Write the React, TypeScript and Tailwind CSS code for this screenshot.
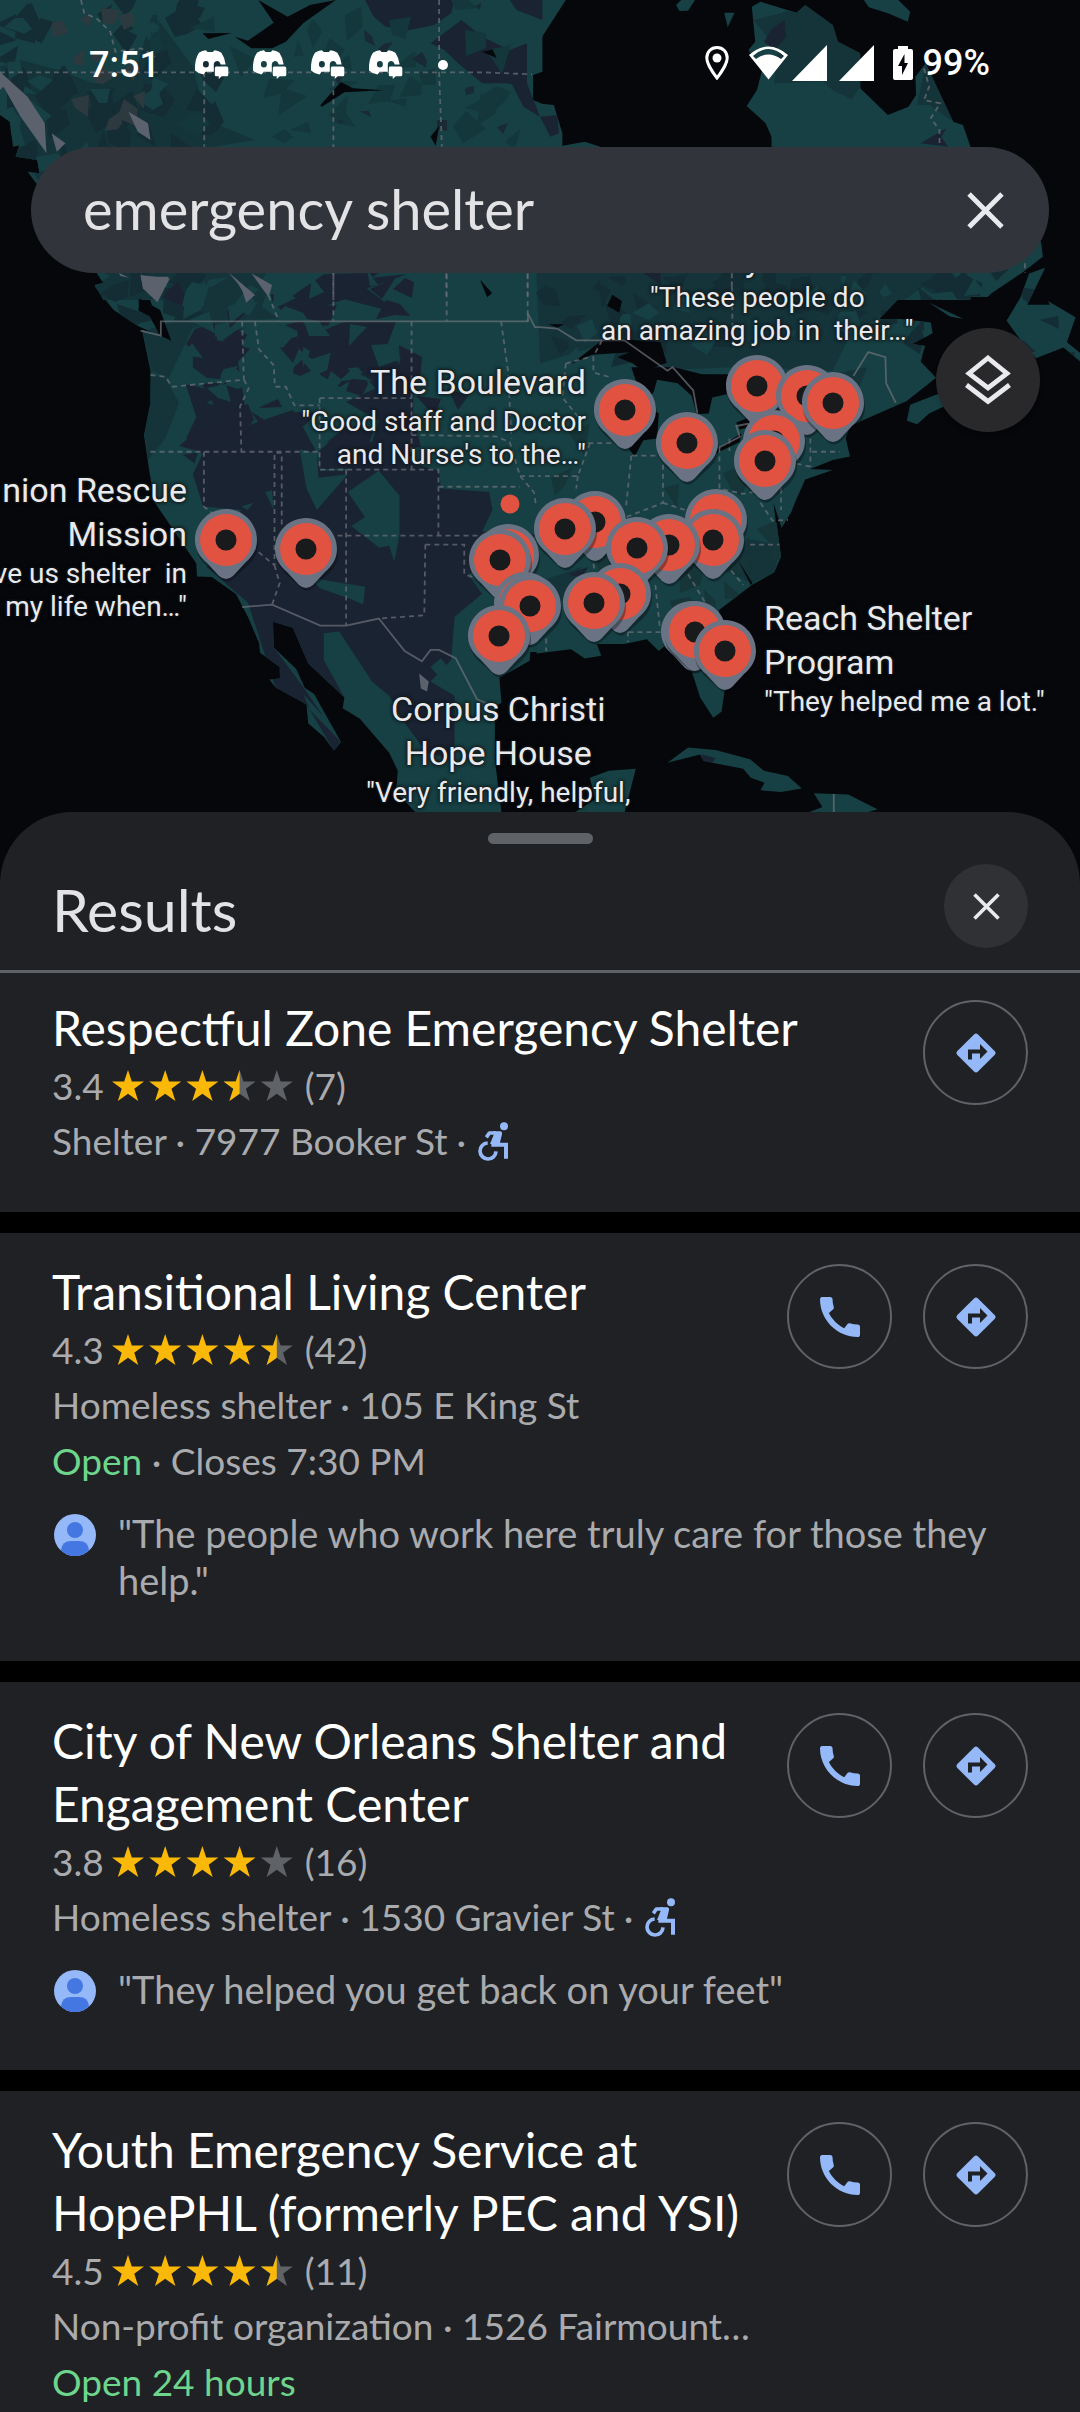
import type { ReactNode } from 'react';

const LATO = "font-['Lato',sans-serif]";
const ROBOTO = "font-['Roboto',sans-serif]";

/* ---------- Map artwork ---------- */

const NW = 'scale(.3444 .3333)';
const NE = 'translate(540 0) scale(.3444 .3333)';
const SW = 'translate(0 260) scale(.3444 .3571)';
const SE = 'translate(540 260) scale(.3444 .3571)';

const LAND: [string, string][] = [
  [NW, 'M0 0H1575V215L1548 225V300L1575 312V900H300L275 855 300 848 120 570 80 515 115 520 108 480 45 470 70 390 85 430 38 440 28 365 0 345Z'],
  [NE, 'M-10 0H75L0 120-10 140Z'],
  [NE, 'M-10 310L40 315 65 400 65 437 130 425 175 440V900H-10Z'],
  [NE, 'M100 460H1250V900H100Z'],
  [NE, 'M615 20L640 5 745 38 770 15 850 75 865 125 930 160 930 265 1010 345 1070 320 1092 285 1090 230 1120 190 1200 365 1228 375 1250 440V720L1455 725 1460 770 1400 818 1296 890H680L672 410 655 370 600 318 630 270 645 210 605 150 625 125Z'],
  [NE, 'M395 15L410 0H450L430 32 405 33Z'],
  [NE, 'M535 38L565 38 545 82Z'],
  [NE, 'M940 0H1040L1075 35 1068 65 1010 40 955 22Z'],
  [SW, 'M300 30L302 70 275 74 330 140 400 185 497 226 465 150 405 142 402 108 465 140H1575V1098L1540 1098 1538 1122 1450 1170 1456 1240 1437 1252 1437 1400 1456 1546 1520 1560H1220L1150 1490 1155 1430 1130 1380 1045 1285 995 1255 1000 1225 895 1130 850 1030 793 1013 795 1085 860 1145 885 1198 912 1215 990 1350 970 1374 940 1335 895 1298 890 1245 800 1197 782 1175 813 1172 812 1140 755 1100 752 1072 720 1000 685 935 615 888 572 886 570 850 450 680 435 600 418 490 437 400 437 310 412 195 465 210 400 100V20Z'],
  [SW, 'M400 20H1575V200H470Z'],
  [SE, 'M-10 20H1385L1300 103 1050 100 985 165 1050 165 1135 175 1140 205 1080 235 1118 240 1105 285 1150 330 1065 395 900 465 888 500 900 550 850 560 785 585 850 588 770 615 740 680 730 705 702 750 680 690 700 830 680 875 615 910 520 980 500 1100 537 1200 527 1265 503 1282 465 1225 440 1150 360 1082 345 1095 310 1062 245 1075 165 1075 178 1108 130 1116 90 1090-10 1102Z'],
  [SE, 'M1065 450L1075 405 1155 375 1240 340 1250 375 1130 430 1095 460Z'],
  [SE, 'M1467 22L1420 38 1395 105 1355 170 1400 230 1440 275 1520 245 1575 290V265L1530 230 1555 160 1475 115 1480 125 1415 125Z'],
  [SE, 'M1130 120L1230 165 1190 158Z'],
  [SE, 'M370 1408L430 1365 510 1372 610 1398 650 1430 720 1445 760 1480 700 1490 640 1485 652 1464 612 1450 590 1425 475 1403 465 1385Z'],
  [SE, 'M770 1550L820 1532 795 1493 895 1497 980 1538 940 1550Z'],
  [SE, 'M95 1550L160 1510 145 1450 200 1430 278 1425 245 1550Z'],
];

const DARK: [string, string][] = [
  [NW, 'M170 210L270 250 400 190 455 0 470 440 480 450V900H300L100 520 0 200 60 180Z'],
  [NW, 'M460 60L560 200 600 360 740 420 620 440H460Z'],
  [NE, 'M620 60L700 40 770 15 850 75 930 160 930 260 905 298 850 270 820 245 680 250 690 150Z'],
  [NE, 'M1120 190L1200 365 1130 315 1095 315Z'],
  [SE, 'M-10 30H1180L1000 150 900 210 850 310 560 300 300 310 200 230 0 290Z'],
  [SE, 'M1080 60L1250 80 1140 95Z'],
  [SW, 'M460 30H800L760 130 810 165 700 172 560 190 490 330 440 310 415 200 540 160Z'],
  [SW, 'M440 320L480 330 520 400 480 500 430 560 420 490Z'],
  [SE, 'M540 870L600 780 700 800 680 875 615 905Z'],
  [SE, 'M0 900L120 860 60 960 0 1000Z'],
  [SE, 'M800 330L950 300 900 420 850 440Z'],
];

const NAVY: [string, string][] = [
  [NW, 'M1060 0L1320 0 1310 40 1260 75 1190 90 1120 80 1085 50Z'],
  [NW, 'M1250 130L1340 60 1400 110 1480 150 1530 130V260L1470 250 1400 250 1330 190 1290 150Z'],
  [NW, 'M1480 0H1575V60L1500 30Z'],
  [NW, 'M1480 240L1530 250 1568 350 1520 320Z'],
  [NE, 'M675 85L710 60 715 110 680 150 650 125Z'],
  [NE, 'M1105 430L1180 385 1165 410 1185 440Z'],
  [NE, 'M0 350L50 345 55 400 30 410Z'],
  [SW, 'M940 40L1100 36 1080 50 1180 40 1065 80 1160 150 1000 110 940 130 950 172 830 130 850 100Z'],
  [SW, 'M860 172H1150L1120 250 1170 300 1200 330V580L930 585 925 500 860 470 1000 400 1040 330 950 310 960 260 905 277 870 250Z'],
  [SW, 'M560 250L580 215 630 215 630 265 740 280 760 330 720 360 790 350 720 400 730 460 650 455 600 370 700 340 600 330 560 300Z'],
  [SW, 'M540 350L700 340 600 400 700 430 640 490 850 420 920 535 930 590H1010L1000 560 1120 540 1200 570 1275 590 1280 640 1420 650 1430 700 1400 760 1560 770 1360 880 1400 935 1320 1000 1310 1120 1250 1180 1320 1220V1400L1240 1380 1170 1290 1130 1220 1080 1180 985 1040 940 1045V1120L1000 1225 895 1130 850 1030 793 1013 795 1085 880 1195 990 1350 970 1374 890 1245 800 1197 720 960 600 860 700 700 590 690 560 600 590 540 540 500 570 440Z'],
  [SW, 'M1300 360L1360 380 1330 420Z'],
  [SW, 'M530 545L575 540 565 570Z'],
  [SE, 'M470 1385L510 1395 500 1408 470 1400Z'],
  [SE, 'M80 880L140 860 120 890Z'],
  [SE, 'M300 36H350V70Z'],
];

const TEAL: [string, string][] = [
  [SW, 'M1010 650L1100 590 1160 660V770L1145 845 1130 800 1100 805 1020 745 1060 720Z'],
  [SW, 'M900 890L1060 915 1055 965 1020 950 930 920Z'],
  [SW, 'M870 530L920 540 925 610 1010 600 920 700 890 640Z'],
  [SW, 'M770 650L790 645 795 700Z'],
  [SW, 'M700 690L735 680 720 700Z'],
  [SW, 'M1320 1000L1400 935 1370 1020Z'],
  [SW, 'M880 1215L960 1300 990 1350 900 1260Z'],
  [SW, 'M690 280L650 170 800 165 840 210 800 290 900 260 850 350 720 460Z'],
  [SW, 'M950 310L1040 300 1090 360 1000 400Z'],
  [SW, 'M870 450L990 390 1100 450 1080 510 980 490 920 540Z'],
  [SW, 'M1250 1140L1280 1115 1310 1150 1290 1185Z'],
  [SW, 'M860 172L920 205 1000 172Z'],
];

const SNOW: [string, string][] = [
  [NW, 'M0 215L80 290 130 370 135 460 60 350 10 260 0 270Z'],
  [NW, 'M373 335L430 370 437 420 400 395Z'],
  [NW, 'M150 400L190 430 165 455Z'],
  [NW, 'M410 830H490L460 900 415 860Z'],
  [NW, 'M665 820L740 885 720 900 690 850Z'],
  [NW, 'M730 820L790 855 780 892Z'],
  [SW, 'M408 42L493 52 457 118 415 80Z'],
  [SW, 'M665 36L740 98 715 120 700 75Z'],
  [SW, 'M1217 1158L1245 1180 1240 1208 1222 1200Z'],
  [SW, 'M345 36L375 50 350 45Z'],
];

const WATER: [string, string][] = [
  [NW, 'M750 0L835 50 900 15 975 0 880 70 830 125 790 145 730 145 682 110 720 122 795 68Z'],
  [NW, 'M588 100L672 99 605 117Z'],
  [NW, 'M990 246L1025 265 1115 271 1000 277 935 320 930 316Z'],
  [NW, 'M1400 155L1430 148 1442 174Z'],
  [NW, 'M1275 378L1265 437 1250 410Z'],
  [NW, 'M1395 840L1428 880 1415 890Z'],
  [SW, 'M405 108L465 140 497 226 460 205 440 160 402 142Z'],
  [SW, 'M1395 58L1428 92 1415 104Z'],
  [SE, 'M195 128L210 97 238 115 230 148Z'],
  [SE, 'M90 292L180 225 245 222 350 230 368 288 300 312 270 290 225 272 260 258 150 265Z'],
  [SE, 'M265 300L390 300 470 320 545 320 560 350 545 375 500 385 490 430 455 432 440 380 400 345 340 335 330 370 300 400Z'],
  [SE, 'M300 400L345 430 340 500 300 505 275 550 255 525Z'],
  [SE, 'M455 565L585 485 580 510 515 540Z'],
  [SE, 'M570 455L610 440 620 465 580 475Z'],
  [SE, 'M678 680L695 735 685 735Z'],
  [SE, 'M575 840L617 905 612 910Z'],
  [SE, 'M785 585L880 560 878 572Z'],
  [SE, 'M25 180H70L50 190Z'],
];

const BORDERS: [string, string][] = [
  [SW, 'M408 198L467 212V172H1533V150L1553 188H1568'],
  [SE, 'M0 188L50 192 105 225H180L245 225 370 310 385 300 445 365 457 430M520 525L580 495 570 465 605 458M910 325L953 258 1003 272 1005 345 1033 400'],
  [SW, 'M703 972L790 965 930 1024H1005L1100 1004 1175 1095 1225 1124 1250 1092H1275L1323 1115 1385 1230 1410 1240'],
  [SE, 'M853 1495V1546'],
];

const STATE_LINES: [string, string][] = [
  [NW, 'M235 0L245 40 280 55 320 95 335 155 410 145 450 170M0 217H1200L1400 217 1545 223M593 217V440M968 217V900M1275 0V217L1283 440M1296 820V900M1532 820V900'],
  [NE, 'M1115 205L1130 260 1115 300 1162 310 1135 355 1160 390V440M557 820V860M1408 790V818'],
  [SW, 'M968 40V172M1297 40V172M1532 40V172M780 100L810 172M703 172L708 335M740 172L752 250 795 295 798 355 830 355 855 407H928M437 322L480 327 500 355 708 335 722 360 697 410 701 537M437 537H928M592 537V690L797 855V540H818V745M797 855L812 905 790 965M928 387V587H1273V772M928 387H1195M1195 172V587M1005 587V1022M980 772H1400M1235 797H1348V880L1380 890M1235 797L1232 995 1100 1004M1195 490L1440 494 1480 510 1510 605 1550 650 1557 690M1455 172L1475 310 1485 500M1273 635H1510M1510 605H1568'],
  [SE, 'M180 225L155 270V315L210 330M75 290L150 270M75 290L65 385 120 450M140 513H210M145 513L110 605H0M110 605L105 640M268 548H340M265 548L250 690M357 548V680L250 720M357 680L420 700M521 525V640L590 655 640 645M560 240L557 60M550 500V535M785 500V580M790 537H870M610 797H695M555 870L590 910M430 880L480 960M155 850L160 880M335 910L348 1030M350 1042H250M255 1040V1070M18 1060V1095M640 680L675 730 720 728M700 640V700M745 570L790 580'],
];

/* Small deterministic generator for the terrain facets. */
function makeFacets(count: number, x0: number, y0: number, w: number, h: number, size: number, seed: number) {
  let s = seed;
  const rnd = () => {
    s = (s * 16807) % 2147483647;
    return s / 2147483647;
  };
  return Array.from({ length: count }, () => {
    const cx = x0 + rnd() * w;
    const cy = y0 + rnd() * h;
    const n = 3 + Math.floor(rnd() * 3);
    const start = rnd() * 6.28;
    return Array.from({ length: n }, (_, i) => {
      const a = start + (i / n) * 6.28;
      const r = size * (0.2 + rnd() * 1.2);
      return `${Math.round(cx + Math.cos(a) * r)},${Math.round(cy + Math.sin(a) * r)}`;
    }).join(' ');
  });
}

const FACETS = [
  { fill: '#142c33', points: makeFacets(60, 0, 0, 220, 330, 18, 77) },
  { fill: '#174044', points: makeFacets(40, 0, 0, 170, 330, 14, 401) },
  { fill: '#2c3a3f', points: makeFacets(12, 60, 0, 90, 130, 11, 9) },
  { fill: '#14373b', points: makeFacets(30, 150, 0, 380, 150, 16, 1234) },
  { fill: '#1a2a35', points: makeFacets(12, 330, 0, 250, 140, 8, 5678) },
  { fill: '#1b2332', points: makeFacets(34, 180, 280, 260, 170, 16, 31) },
  { fill: '#174044', points: makeFacets(30, 190, 280, 240, 130, 14, 913) },
  { fill: '#142c33', points: makeFacets(40, 540, 270, 460, 90, 14, 2222) },
  { fill: '#174044', points: makeFacets(24, 560, 275, 460, 120, 12, 3434) },
  { fill: '#153539', points: makeFacets(24, 560, 420, 240, 230, 16, 808) },
  { fill: '#142c33', points: makeFacets(10, 1000, 280, 80, 130, 11, 66) },
];

const PINS: [number, number][] = [
  [757, 386], [807, 396], [833, 403], [625, 410], [687, 443], [774, 441], [765, 461],
  [716, 520], [713, 540], [595, 522], [565, 529], [669, 545], [637, 548],
  [508, 555], [500, 560], [620, 594], [594, 603], [525, 603], [530, 606], [499, 636],
  [692, 632], [695, 632], [725, 651], [226, 540], [306, 549],
];

function Shapes({ items, fill }: { items: [string, string][]; fill: string }) {
  return <g fill={fill}>{items.map(([t, d], i) => <path key={i} transform={t} d={d} />)}</g>;
}

function Lines({ items, dash }: { items: [string, string][]; dash?: string }) {
  return (
    <g fill="none" stroke="#6a6e75" strokeOpacity=".75" strokeWidth="1.8" strokeDasharray={dash}>
      {items.map(([t, d], i) => <path key={i} transform={t} d={d} vectorEffect="non-scaling-stroke" />)}
    </g>
  );
}

function MapArt() {
  return (
    <svg className="absolute left-0 top-0 h-[812px] w-[1080px]" viewBox="0 0 1080 812" aria-hidden="true">
      <defs>
        <clipPath id="land">
          {LAND.map(([t, d], i) => <path key={i} transform={t} d={d} />)}
        </clipPath>
      </defs>
      <rect width="1080" height="812" fill="#05070b" />
      <Shapes items={LAND} fill="#164043" />
      <g clipPath="url(#land)">
        <Shapes items={DARK} fill="#14343a" />
        <Shapes items={NAVY} fill="#1a2332" />
        <Shapes items={TEAL} fill="#164043" />
        {FACETS.map((f, i) => (
          <g key={i} fill={f.fill}>{f.points.map((p, j) => <polygon key={j} points={p} />)}</g>
        ))}
        <Shapes items={SNOW} fill="#5b616d" />
      </g>
      <Shapes items={WATER} fill="#05070b" />
      <Lines items={STATE_LINES} dash="5 4" />
      <Lines items={BORDERS} />
      {PINS.map(([x, y], i) => (
        <g key={i} transform={`translate(${x} ${y})`}>
          <path d="M0-29C17-29 31-15 31 2 31 12 26 19 19 25L6 37Q0 42-6 37L-19 25C-26 19-31 12-31 2-31-15-17-29 0-29Z" transform="translate(1 2)" fill="#05070b" opacity=".35" />
          <path d="M0-31C17-31 31-17 31 0 31 10 26 17 19 23L7 36Q0 42-7 36L-19 23C-26 17-31 10-31 0-31-17-17-31 0-31Z" fill="#6a7383" />
          <circle r="26" fill="#e25241" />
          <circle r="10.5" fill="#191a1c" />
        </g>
      ))}
      <circle cx="510" cy="504" r="9.5" fill="#e25241" />
    </svg>
  );
}

function MapLabel({ title, lines, className }: { title: string[]; lines: string[]; className: string }) {
  return (
    <div className={`absolute whitespace-pre text-[#e8eaed] [text-shadow:0_0_3px_#16181b,0_0_3px_#16181b,0_0_4px_#16181b] ${ROBOTO} ${className}`}>
      {title.map((t) => <p key={t} className="text-[34px] leading-[44px]">{t}</p>)}
      <div className="pt-px">
        {lines.map((t) => <p key={t} className="text-[28px] leading-[33px]">{t}</p>)}
      </div>
    </div>
  );
}

/* ---------- Icons ---------- */

function ChatIcon() {
  return (
    <svg className="h-[29px] w-[35px]" viewBox="0 0 104 88" fill="#fff" aria-hidden="true">
      <path fillRule="evenodd" d="M14 8Q24 2 35 1L40 6H56L61 1Q72 2 82 8 93 24 95 44H80Q76 32 66 34 58 37 59 46V66L34 66 28 74Q12 72 2 62 0 28 14 8ZM35 33a9 10 0 1 0 0 20 9 10 0 1 0 0-20Z" />
      <path d="M66 50H98Q103 50 103 55V75Q103 80 98 80H83L74 88V80H66Q62 80 62 75V55Q62 50 66 50Z" />
    </svg>
  );
}

function CrossIcon({ className }: { className: string }) {
  return (
    <svg className={className} viewBox="0 0 36 36" fill="none" stroke="#e8eaed" strokeWidth="4.8" aria-hidden="true">
      <path d="M2 2L34 34M34 2L2 34" />
    </svg>
  );
}

const STAR = 'M16 0L19.8 11.4 32 11.6 22.3 18.8 26.2 31 16 23.8 5.8 31 9.7 18.8 0 11.6 12.2 11.4Z';

function Stars({ value }: { value: number }) {
  return (
    <svg className="h-[32px] w-[181px] shrink-0" viewBox="0 0 181 32" role="img" aria-label={`${value} of 5 stars`}>
      {[0, 1, 2, 3, 4].map((i) => (
        <g key={i} transform={`translate(${i * 37.2} 0)`}>
          <path d={STAR} fill={value >= i + 1 ? '#fab908' : '#5f6368'} />
          {value === i + 0.5 && <path d="M16 0V23.8L5.8 31 9.7 18.8 0 11.6 12.2 11.4Z" fill="#fab908" />}
        </g>
      ))}
    </svg>
  );
}

function WheelchairIcon() {
  return (
    <svg className="h-[39px] w-[31px] shrink-0" viewBox="0 0 93 117" fill="none" stroke="#94b8f8" strokeWidth="11" role="img" aria-label="Wheelchair accessible">
      <circle cx="78" cy="13" r="12" fill="#94b8f8" stroke="none" />
      <path d="M25 46L34 33H54" strokeLinejoin="round" />
      <path d="M44 28H68Q74 30 72 37L65 66H36L48 36Z" fill="#94b8f8" stroke="none" />
      <path d="M40 68H84V110" strokeWidth="12" />
      <path d="M29 63A24 24 0 1 0 54 88" />
    </svg>
  );
}

function DirectionsIcon() {
  return (
    <svg className="h-[40px] w-[40px]" viewBox="0 0 40 40" aria-hidden="true">
      <path d="M22 1.4L38.6 18Q40.5 20 38.6 22L22 38.6Q20 40.5 18 38.6L1.4 22Q-.5 20 1.4 18L18 1.4Q20-.5 22 1.4Z" fill="#94b8f8" />
      <path d="M12 26.500V16.500H24V11L31.500 18.500 24 26V20.500H16V26.500Z" fill="#202124" />
    </svg>
  );
}

function PhoneIcon() {
  return (
    <svg className="h-[40px] w-[40px]" viewBox="3 3 18 18" fill="#94b8f8" aria-hidden="true">
      <path d="M20.01 15.38c-1.23 0-2.42-.2-3.53-.56a.977.977 0 0 0-1.01.24l-1.57 1.97c-2.83-1.35-5.48-3.9-6.89-6.83l1.95-1.66c.27-.28.35-.67.24-1.02-.37-1.11-.56-2.3-.56-3.53 0-.54-.45-.99-.99-.99H4.19C3.65 3 3 3.24 3 3.99 3 13.28 10.73 21 20.01 21c.71 0 .99-.63.99-1.18v-3.45c0-.54-.45-.99-.99-.99z" />
    </svg>
  );
}

function Avatar() {
  return (
    <svg className="mt-1 h-[42px] w-[42px] shrink-0" viewBox="0 0 42 42" aria-hidden="true">
      <clipPath id="disc"><circle cx="21" cy="21" r="21" /></clipPath>
      <g clipPath="url(#disc)">
        <rect width="42" height="42" fill="#94b8f8" />
        <circle cx="21" cy="16" r="8" fill="#4577e2" />
        <path d="M7 42V36Q8 27 17 27H25Q34 27 35 36V42Z" fill="#4577e2" />
      </g>
    </svg>
  );
}

/* ---------- Page parts ---------- */

function StatusBar() {
  return (
    <div className={`relative flex h-[129px] items-center justify-between pl-[89px] pr-[90px] text-white ${ROBOTO}`}>
      <div className="flex items-center">
        <span className="w-[105px] text-[36px] font-medium leading-[44px]">7:51</span>
        <div className="flex items-center gap-[23px]">
          <ChatIcon /><ChatIcon /><ChatIcon /><ChatIcon />
        </div>
        <span className="ml-[35px] size-[10px] rounded-full bg-white" />
      </div>
      <div className="flex items-center pb-1">
        <svg className="h-[34px] w-[24px]" viewBox="0 0 24 34" fill="none" aria-hidden="true">
          <path d="M12 1.5C6 1.5 1.8 6 1.8 12 1.8 19 12 32 12 32S22.2 19 22.2 12C22.2 6 18 1.5 12 1.5Z" stroke="#fff" strokeWidth="3" />
          <circle cx="12" cy="12" r="4.5" fill="#fff" />
        </svg>
        <svg className="ml-[20px] h-[34px] w-[39px]" viewBox="0 0 39 34" fill="#fff" aria-hidden="true">
          <path fillRule="evenodd" d="M0 9Q19.5-8 39 9L19.5 33.5ZM4 10L7 13Q19.5 4 32 13L35 10Q19.5-4 4 10Z" />
        </svg>
        <svg className="ml-[4px] h-[36px] w-[35px]" viewBox="0 0 35 36" fill="#fff" aria-hidden="true"><path d="M35 0V36H0Z" /></svg>
        <svg className="ml-[12px] h-[36px] w-[35px]" viewBox="0 0 35 36" fill="#fff" aria-hidden="true"><path d="M35 0V36H0Z" /></svg>
        <svg className="ml-[19px] h-[34px] w-[20px]" viewBox="0 0 20 34" fill="#fff" aria-hidden="true">
          <path fillRule="evenodd" d="M5 0H15V3H18Q20 3 20 5V32Q20 34 18 34H2Q0 34 0 32V5Q0 3 2 3H5ZM11.5 8L5 20H9V29L15 17H11.5Z" />
        </svg>
        <span className="ml-[10px] text-[36px] font-medium leading-[44px]">99%</span>
      </div>
    </div>
  );
}

function RoundButton({ label, children }: { label: string; children: ReactNode }) {
  return (
    <button type="button" aria-label={label} className="flex size-[105px] items-center justify-center rounded-full border-2 border-[#5f6368]">
      {children}
    </button>
  );
}

interface Place {
  name: string;
  rating: string;
  stars: number;
  reviews: number;
  address: string;
  accessible?: boolean;
  open?: string;
  closes?: string;
  quote?: string;
  phone: boolean;
}

const PLACES: Place[] = [
  { name: 'Respectful Zone Emergency Shelter', rating: '3.4', stars: 3.5, reviews: 7, address: 'Shelter · 7977 Booker St', accessible: true, phone: false },
  { name: 'Transitional Living Center', rating: '4.3', stars: 4.5, reviews: 42, address: 'Homeless shelter · 105 E King St', open: 'Open', closes: ' · Closes 7:30 PM', quote: '"The people who work here truly care for those they help."', phone: true },
  { name: 'City of New Orleans Shelter and Engagement Center', rating: '3.8', stars: 4, reviews: 16, address: 'Homeless shelter · 1530 Gravier St', accessible: true, quote: '"They helped you get back on your feet"', phone: true },
  { name: 'Youth Emergency Service at HopePHL (formerly PEC and YSI)', rating: '4.5', stars: 4.5, reviews: 11, address: 'Non-profit organization · 1526 Fairmount…', open: 'Open 24 hours', phone: true },
];

function PlaceCard({ place, first, last }: { place: Place; first: boolean; last: boolean }) {
  return (
    <li className={`bg-[#202124] px-[52px] ${first ? 'pt-[23px]' : 'pt-[27px]'} ${last ? 'pb-4' : place.quote ? 'pb-[57px]' : 'pb-[43px]'}`}>
      <div className="flex items-start gap-[12px]">
        <div className="min-w-0 flex-1">
          <h2 className="text-[48px] leading-[63px] text-white">{place.name}</h2>
          <div className="flex h-[54px] items-center">
            <span className="mr-[8px]">{place.rating}</span>
            <Stars value={place.stars} />
            <span className="ml-[12px]">({place.reviews})</span>
          </div>
          <div className="flex h-[56px] items-center">
            <span className="truncate leading-[56px]">{place.address}</span>
            {place.accessible && (
              <>
                <span className="ml-[9px] mr-[12px]">·</span>
                <WheelchairIcon />
              </>
            )}
          </div>
          {place.open && (
            <p className="leading-[56px]">
              <span className="text-[#6dd58c]">{place.open}</span>
              {place.closes}
            </p>
          )}
        </div>
        <div className="mt-[4px] flex gap-[31px]">
          {place.phone && <RoundButton label={`Call ${place.name}`}><PhoneIcon /></RoundButton>}
          <RoundButton label={`Directions to ${place.name}`}><DirectionsIcon /></RoundButton>
        </div>
      </div>
      {place.quote && (
        <div className="mt-[21px] flex gap-[22px] pl-[2px]">
          <Avatar />
          <p className="text-[38px] leading-[47px]">{place.quote}</p>
        </div>
      )}
    </li>
  );
}

export default function App() {
  return (
    <div className={`flex min-h-screen flex-col overflow-hidden bg-[#05070b] ${LATO}`}>
      <header className="relative h-[812px] overflow-hidden">
        <MapArt />
        <MapLabel title={['y']} lines={[]} className="left-[745px] top-[237px]" />
        <MapLabel title={[]} lines={['"These people do', 'an amazing job in  their…"']} className="left-[601px] top-[280px] text-center" />
        <MapLabel title={['The Boulevard']} lines={['"Good staff and Doctor', 'and Nurse\'s to the…"']} className="right-[494px] top-[360px] text-right" />
        <MapLabel title={['nion Rescue', 'Mission']} lines={['ve us shelter  in', 'my life when…"']} className="right-[893px] top-[468px] text-right" />
        <MapLabel title={['Reach Shelter', 'Program']} lines={['"They helped me a lot."']} className="left-[764px] top-[596px]" />
        <MapLabel title={['Corpus Christi', 'Hope House']} lines={['"Very friendly, helpful,']} className="left-[366px] top-[687px] text-center" />

        <StatusBar />
        <div className="relative mx-[31px] mt-[18px] flex h-[126px] items-center rounded-full bg-[#32343c] pl-[52px] pr-[45px]">
          <input
            type="text"
            aria-label="Search"
            defaultValue="emergency shelter"
            className="h-full min-w-0 flex-1 bg-transparent pb-1 text-[56px] text-[#e3e3e6] outline-none"
          />
          <button type="button" aria-label="Clear search"><CrossIcon className="h-[37px] w-[37px]" /></button>
        </div>
        <button type="button" aria-label="Map layers" className="absolute right-[40px] top-[328px] flex size-[104px] items-center justify-center rounded-full bg-[#29292c] shadow-md">
          <svg className="h-[50px] w-[46px]" viewBox="0 0 46 50" fill="none" stroke="#e8eaed" strokeWidth="4.8" aria-hidden="true">
            <path d="M23 3L42 18.500 23 33 4 18.500Z" />
            <path d="M1.500 30L23 46.500 44.500 30" />
          </svg>
        </button>
      </header>

      <main className="relative flex flex-1 flex-col">
        <div className="flex flex-col rounded-t-[72px] border-b-[3px] border-[#5f6368] bg-[#202124] pb-[22px] pt-[21px]">
          <div className="h-[11px] w-[105px] self-center rounded-full bg-[#5f6368]" />
          <div className="mt-[20px] flex items-center justify-between px-[52px]">
            <h1 className="pt-2 text-[59px] leading-[72px] text-[#e3e3e6]">Results</h1>
            <button type="button" aria-label="Close results" className="flex size-[84px] items-center justify-center rounded-full bg-[#303134]">
              <CrossIcon className="h-[27px] w-[27px]" />
            </button>
          </div>
        </div>
        <ul className="flex flex-1 flex-col gap-[21px] bg-black text-[37px] text-[#a9abae]">
          {PLACES.map((p, i) => (
            <PlaceCard key={p.name} place={p} first={i === 0} last={i === PLACES.length - 1} />
          ))}
        </ul>
      </main>
    </div>
  );
}
